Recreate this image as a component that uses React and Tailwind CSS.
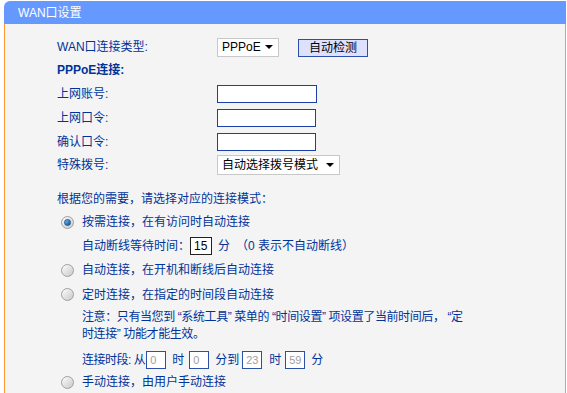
import React from "react";

const font = { fontFamily: '"Liberation Sans", "Noto Sans CJK SC", sans-serif' };

function Radio({ checked }) {
  return (
    <span className="relative inline-flex w-[13px] h-[13px] rounded-full border border-[#a0a0a0] bg-gradient-to-br from-[#fdfdfd] to-[#c8c8c8] items-center justify-center shrink-0">
      {checked && (
        <span className="w-[7px] h-[7px] rounded-full bg-gradient-to-br from-[#6fc4ff] to-[#0050a8] border border-[#1f4f86]" />
      )}
    </span>
  );
}

function Select({ text, w }) {
  return (
    <div className={`${w} h-full bg-white border border-[#c8c8c8] flex items-center justify-between pl-[4px] pr-[5px] text-black text-[12px]`}>
      <span>{text}</span>
      <span className="w-0 h-0 border-x-[4px] border-x-transparent border-t-[4px] border-t-black" />
    </div>
  );
}

function Field({ label, children, h = "h-[24px]" }) {
  return (
    <div className={`flex items-center ${h}`}>
      <div className="w-[160px]">{label}</div>
      {children}
    </div>
  );
}

function SmallBox({ value, cls }) {
  return (
    <span className={`inline-flex items-center w-[20px] h-[18px] bg-white border border-[#2c4fa8] pl-[3px] text-[11px] text-[#a0a0a0] ${cls || ""}`}>
      {value}
    </span>
  );
}

export default function App() {
  return (
    <div className="w-[567px] h-[393px] bg-white overflow-hidden flex flex-col" style={font}>
      {/* 标题栏 */}
      <div className="mt-[1px] ml-[4px] mr-[1px] h-[23px] bg-[#6699ff] rounded-tl-[6px] flex items-center pl-[14px] text-white text-[12px]">
        WAN口设置
      </div>

      <div className="ml-[4px] mr-[1px] flex-1 border-x border-[#ff9933] bg-[#f4f4f4] pl-[52px] pt-[12px] text-[12px] text-[#003399]">
        <Field label="WAN口连接类型:" h="h-[22px]">
          <div className="h-[19px] flex items-center gap-[19px]">
            <Select text="PPPoE" w="w-[62px]" />
            <button className="h-[18px] w-[70px] mt-[2px] bg-[#dde0ff] border border-[#2c4fa8] text-black text-[12px] leading-none">
              自动检测
            </button>
          </div>
        </Field>

        <div className="h-[24px] flex items-center font-bold">PPPoE连接:</div>

        <Field label="上网账号:">
          <div className="w-[100px] h-[18px] bg-white border border-[#1a3fa8]" />
        </Field>
        <Field label="上网口令:">
          <div className="w-[99px] h-[18px] bg-white border border-[#1a3fa8]" />
        </Field>
        <Field label="确认口令:">
          <div className="w-[99px] h-[18px] bg-white border border-[#1a3fa8]" />
        </Field>
        <Field label="特殊拨号:" h="h-[22px]">
          <div className="h-[20px] flex">
            <Select text="自动选择拨号模式" w="w-[123px]" />
          </div>
        </Field>

        <div className="mt-[12px] h-[22px] flex items-center">根据您的需要，请选择对应的连接模式：</div>

        <div className="h-[24px] flex items-center gap-[8px] pl-[4px]">
          <Radio checked />
          <span>按需连接，在有访问时自动连接</span>
        </div>
        <div className="h-[24px] flex items-center pl-[25px] whitespace-nowrap">
          <span>自动断线等待时间：</span>
          <span className="inline-flex items-center w-[22px] h-[18px] bg-white border border-[#222] pl-[3px] text-black">15</span>
          <span className="ml-[6px]">分</span>
          <span className="ml-[6px]">（0 表示不自动断线）</span>
        </div>
        <div className="h-[24px] flex items-center gap-[8px] pl-[4px]">
          <Radio />
          <span>自动连接，在开机和断线后自动连接</span>
        </div>
        <div className="h-[25px] flex items-center gap-[8px] pl-[4px]">
          <Radio />
          <span>定时连接，在指定的时间段自动连接</span>
        </div>
        <div className="pl-[25px] pt-[2px] leading-[17px] whitespace-nowrap tracking-[-0.4px]">
          注意：只有当您到 “系统工具” 菜单的 “时间设置” 项设置了当前时间后， “定
          <br />
          时连接” 功能才能生效。
        </div>
        <div className="mt-[5px] h-[24px] flex items-center pl-[25px] whitespace-nowrap">
          <span className="tracking-[-0.5px]">连接时段: 从</span>
          <SmallBox value="0" cls="ml-[1px]" />
          <span className="ml-[6px]">时</span>
          <SmallBox value="0" cls="ml-[5px]" />
          <span className="ml-[6px]">分到</span>
          <SmallBox value="23" cls="ml-[3px]" />
          <span className="ml-[7px]">时</span>
          <SmallBox value="59" cls="ml-[4px]" />
          <span className="ml-[6px]">分</span>
        </div>
        <div className="h-[20px] flex items-center gap-[8px] pl-[4px]">
          <Radio />
          <span>手动连接，由用户手动连接</span>
        </div>
      </div>
    </div>
  );
}
